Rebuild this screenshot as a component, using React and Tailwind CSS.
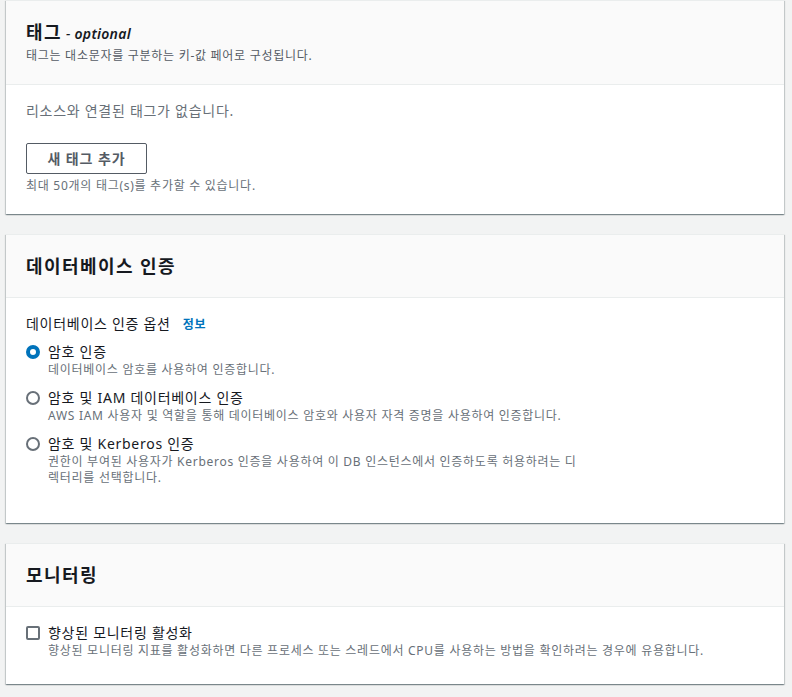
const font = { fontFamily: '"Noto Sans", "Noto Sans CJK KR", sans-serif' };

function Card({ title, optional, subtitle, children, bodyClass }) {
  return (
    <div className="bg-white border-t border-[#eaeded] shadow-[0_1px_1px_0_rgba(0,28,36,0.3),1px_1px_1px_0_rgba(0,28,36,0.15),-1px_1px_1px_0_rgba(0,28,36,0.15)]">
      <div className="bg-[#fafafa] border-b border-[#eaeded] px-5 py-5">
        <h2 className="text-[18px] leading-[22px] font-bold text-[#16191f] tracking-[0.08em]">
          {title}
          {optional && <span className="text-[14px] font-normal italic tracking-[0.02em]"> - <i className="font-semibold">optional</i></span>}
        </h2>
        {subtitle && <p className="mt-[3px] text-[12px] leading-4 text-[#545b64]">{subtitle}</p>}
      </div>
      <div className={bodyClass}>{children}</div>
    </div>
  );
}

function Radio({ checked, label, desc }) {
  return (
    <label className="flex items-start gap-2">
      <span className="mt-[3px] flex-none">
        {checked ? (
          <span className="block w-[14px] h-[14px] rounded-full border-[4px] border-[#0073bb] bg-white" />
        ) : (
          <span className="block w-[14px] h-[14px] rounded-full border-2 border-[#687078] bg-white" />
        )}
      </span>
      <span className="block">
        <span className="block text-[14px] leading-5 text-[#16191f]">{label}</span>
        <span className="block text-[12px] leading-4 text-[#687078] whitespace-nowrap">{desc}</span>
      </span>
    </label>
  );
}

export default function App() {
  return (
    <div className="min-h-[697px] bg-[#f2f3f3] pl-[6px] pr-[8px] pb-4 tracking-[0.045em]" style={font}>
      <div className="flex flex-col gap-5">
        {/* Tags */}
        <Card
          title="태그"
          optional
          subtitle="태그는 대소문자를 구분하는 키-값 페어로 구성됩니다."
          bodyClass="px-5 pt-4 pb-5"
        >
          <p className="text-[14px] leading-5 text-[#687078]">리소스와 연결된 태그가 없습니다.</p>
          <button className="mt-[22px] w-[121px] h-[31px] border border-[#545b64] rounded-[2px] text-[14px] font-bold text-[#545b64] bg-white tracking-[0.065em]">
            새 태그 추가
          </button>
          <p className="mt-1 text-[12px] leading-4 text-[#687078]">최대 50개의 태그(s)를 추가할 수 있습니다.</p>
        </Card>

        {/* DB auth */}
        <Card title="데이터베이스 인증" bodyClass="px-5 pt-4 pb-[37px]">
          <div className="text-[14px] leading-5 text-[#16191f]">
            데이터베이스 인증 옵션
            <a className="ml-3 text-[12px] font-bold text-[#0073bb]">정보</a>
          </div>
          <div className="mt-[7px] flex flex-col gap-[10px]">
            <Radio checked label="암호 인증" desc="데이터베이스 암호를 사용하여 인증합니다." />
            <Radio
              label="암호 및 IAM 데이터베이스 인증"
              desc="AWS IAM 사용자 및 역할을 통해 데이터베이스 암호와 사용자 자격 증명을 사용하여 인증합니다."
            />
            <Radio
              label="암호 및 Kerberos 인증"
              desc={
                <>
                  권한이 부여된 사용자가 Kerberos 인증을 사용하여 이 DB 인스턴스에서 인증하도록 허용하려는 디
                  <br />
                  렉터리를 선택합니다.
                </>
              }
            />
          </div>
        </Card>

        {/* Monitoring */}
        <Card title="모니터링" bodyClass="px-5 pt-4 pb-[25px]">
          <label className="flex items-start gap-2">
            <span className="mt-[3px] block w-[14px] h-[14px] rounded-[2px] border-2 border-[#687078] bg-white flex-none" />
            <span className="block">
              <span className="block text-[14px] leading-5 text-[#16191f]">향상된 모니터링 활성화</span>
              <span className="block text-[12px] leading-4 text-[#687078]">
                향상된 모니터링 지표를 활성화하면 다른 프로세스 또는 스레드에서 CPU를 사용하는 방법을 확인하려는 경우에 유용합니다.
              </span>
            </span>
          </label>
        </Card>
      </div>
    </div>
  );
}
